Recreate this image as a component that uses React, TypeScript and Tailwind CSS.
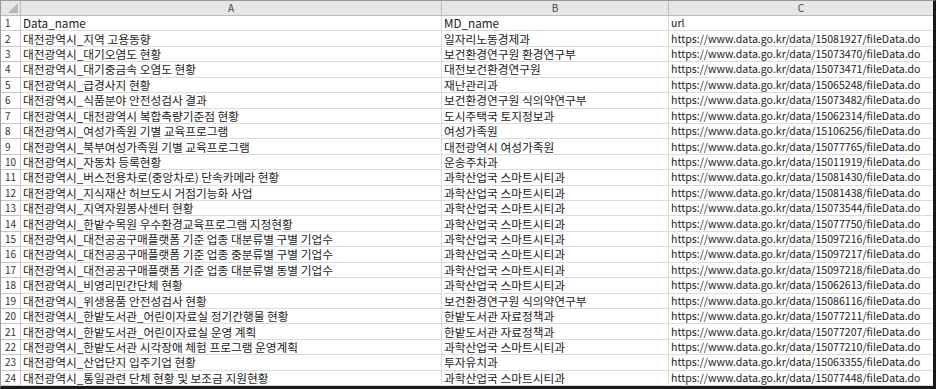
import React from "react";

const rows: [string, string, string][] = [
  ["Data_name", "MD_name", "url"],
  ["대전광역시_지역 고용동향", "일자리노동경제과", "15081927"],
  ["대전광역시_대기오염도 현황", "보건환경연구원 환경연구부", "15073470"],
  ["대전광역시_대기중금속 오염도 현황", "대전보건환경연구원", "15073471"],
  ["대전광역시_급경사지 현황", "재난관리과", "15065248"],
  ["대전광역시_식품분야 안전성검사 결과", "보건환경연구원 식의약연구부", "15073482"],
  ["대전광역시_대전광역시 복합측량기준점 현황", "도시주택국 토지정보과", "15062314"],
  ["대전광역시_여성가족원 기별 교육프로그램", "여성가족원", "15106256"],
  ["대전광역시_북부여성가족원 기별 교육프로그램", "대전광역시 여성가족원", "15077765"],
  ["대전광역시_자동차 등록현황", "운송주차과", "15011919"],
  ["대전광역시_버스전용차로(중앙차로) 단속카메라 현황", "과학산업국 스마트시티과", "15081430"],
  ["대전광역시_지식재산 허브도시 거점기능화 사업", "과학산업국 스마트시티과", "15081438"],
  ["대전광역시_지역자원봉사센터 현황", "과학산업국 스마트시티과", "15073544"],
  ["대전광역시_한밭수목원 우수환경교육프로그램 지정현황", "과학산업국 스마트시티과", "15077750"],
  ["대전광역시_대전공공구매플랫폼 기준 업종 대분류별 구별 기업수", "과학산업국 스마트시티과", "15097216"],
  ["대전광역시_대전공공구매플랫폼 기준 업종 중분류별 구별 기업수", "과학산업국 스마트시티과", "15097217"],
  ["대전광역시_대전공공구매플랫폼 기준 업종 대분류별 동별 기업수", "과학산업국 스마트시티과", "15097218"],
  ["대전광역시_비영리민간단체 현황", "과학산업국 스마트시티과", "15062613"],
  ["대전광역시_위생용품 안전성검사 현황", "보건환경연구원 식의약연구부", "15086116"],
  ["대전광역시_한밭도서관_어린이자료실 정기간행물 현황", "한밭도서관 자료정책과", "15077211"],
  ["대전광역시_한밭도서관_어린이자료실 운영 계획", "한밭도서관 자료정책과", "15077207"],
  ["대전광역시_한밭도서관 시각장애 체험 프로그램 운영계획", "과학산업국 스마트시티과", "15077210"],
  ["대전광역시_산업단지 입주기업 현황", "투자유치과", "15063355"],
  ["대전광역시_통일관련 단체 현황 및 보조금 지원현황", "과학산업국 스마트시티과", "15077448"],
];

const font = { fontFamily: '"Noto Sans CJK KR", "Noto Sans", sans-serif' };

export default function App() {
  return (
    <div className="w-[936px] h-[389px] bg-white overflow-hidden" style={font}>
      <div className="w-[936px] h-[389px] border-l border-t border-[#9a9a9a] border-r-[3px] border-b-[3px] border-r-[#1a1a1a] border-b-[#1a1a1a]">
        <div className="grid grid-cols-[20px_421px_227px_1fr] grid-rows-[15px_repeat(24,1fr)] h-full text-[#1c1c1c] leading-[14px]">
          <div className="relative bg-[#e6e6e6] border-r border-b border-[#bdbdbd]">
            <svg className="absolute right-[2px] bottom-[2px]" width="10" height="10" viewBox="0 0 10 10">
              <polygon points="10,0 10,10 0,10" fill="#b8b8b8" />
            </svg>
          </div>
          <div className="bg-[#e6e6e6] border-r border-b border-[#bdbdbd] flex items-center justify-center text-[10px] text-[#444]">A</div>
          <div className="bg-[#e6e6e6] border-r border-b border-[#bdbdbd] flex items-center justify-center text-[10px] text-[#444]">B</div>
          <div className="bg-[#e6e6e6] border-b border-[#bdbdbd] flex items-center justify-center text-[10px] text-[#444]">C</div>
          {rows.map((r, i) => (
            <React.Fragment key={i}>
              <div className="border-r border-b border-[#c6c6c6] flex items-center pl-[4px] text-[10px] text-[#333]">
                {i + 1}
              </div>
              <div className="border-r border-b border-[#dcdcdc] flex items-center pl-[2px] whitespace-nowrap text-[11.7px]">
                {r[0]}
              </div>
              <div className="border-r border-b border-[#dcdcdc] flex items-center pl-[2px] whitespace-nowrap text-[11.7px]">
                {r[1]}
              </div>
              <div className="border-b border-[#dcdcdc] flex items-center pl-[2px] whitespace-nowrap text-[10.6px]">
                {i === 0 ? r[2] : `https://www.data.go.kr/data/${r[2]}/fileData.do`}
              </div>
            </React.Fragment>
          ))}
        </div>
      </div>
    </div>
  );
}
